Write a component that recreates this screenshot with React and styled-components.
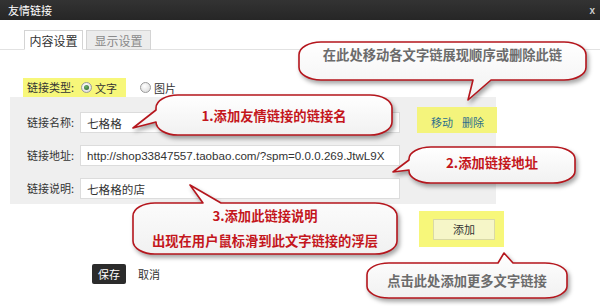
import React from "react";
import styled, { createGlobalStyle } from "styled-components";

const GlobalStyle = createGlobalStyle`
  html, body {
    margin: 0;
    padding: 0;
    background: #fff;
  }
  body {
    font-family: "Noto Sans CJK SC", "Liberation Sans", sans-serif;
    font-size: 11px;
    color: #333;
  }
`;

const Page = styled.div`
  position: relative;
  width: 600px;
  height: 306px;
  overflow: hidden;
  background: #fff;
`;

const TitleBar = styled.div`
  display: flex;
  align-items: center;
  justify-content: space-between;
  height: 20px;
  padding: 0 5px 0 8px;
  background: linear-gradient(#333, #262626);
  color: #fff;
  font-size: 11px;
`;

const Close = styled.span`
  color: #ccc;
  font: bold 10px "Liberation Sans", sans-serif;
`;

const TabBar = styled.div`
  display: flex;
  gap: 3px;
  margin-top: 10px;
  padding-left: 24px;
  border-bottom: 1px solid #e2e2e2;
`;

const Tab = styled.div`
  width: ${(p) => p.$w}px;
  height: 20px;
  margin-bottom: -1px;
  box-sizing: border-box;
  border: 1px solid #d4d4d4;
  border-bottom-color: ${(p) => (p.$active ? "#fff" : "#d4d4d4")};
  background: ${(p) => (p.$active ? "#fff" : "#ececec")};
  color: ${(p) => (p.$active ? "#333" : "#8a8a8a")};
  font-size: 12px;
  line-height: 19px;
  text-align: center;
`;

const TypeRow = styled.div`
  display: flex;
  align-items: center;
  margin: 28px 0 0 23px;
  height: 19px;
`;

const Highlight = styled.div`
  display: flex;
  align-items: center;
  height: 100%;
  padding: 0 9px 0 4px;
  background: #f7f77a;
`;

const Label = styled.span`
  width: ${(p) => p.$w || 53}px;
  flex-shrink: 0;
  color: #333;
  line-height: 21px;
`;

const Radio = styled.span`
  position: relative;
  width: 11px;
  height: 11px;
  box-sizing: border-box;
  margin: 0 3px 0 ${(p) => p.$gap}px;
  border-radius: 50%;
  border: 1px solid #9a9a9a;
  background: radial-gradient(circle at 40% 35%, #fff, #d6d6d6);
  &::after {
    content: "";
    display: ${(p) => (p.$checked ? "block" : "none")};
    position: absolute;
    left: 2px;
    top: 2px;
    width: 5px;
    height: 5px;
    border-radius: 50%;
    background: radial-gradient(circle at 40% 35%, #6fb36f, #245e24);
  }
`;

const Panel = styled.div`
  display: flex;
  flex-direction: column;
  gap: 12px;
  margin: 0 104px 0 10px;
  padding: 10px 0 5px 17px;
  background: #efefef;
`;

const Row = styled.div`
  display: flex;
  align-items: flex-end;
`;

const Field = styled.input`
  width: 320px;
  height: 21px;
  box-sizing: border-box;
  margin: 0;
  padding: 0 6px;
  border: 1px solid #dcdcdc;
  background: #fff;
  color: #333;
  font: 11.6px "Liberation Sans", "Noto Sans CJK SC", sans-serif;
  outline: none;
`;

const Actions = styled.div`
  display: flex;
  align-items: center;
  gap: 9px;
  width: 80px;
  height: 26px;
  box-sizing: border-box;
  margin-left: 17px;
  margin-right: -1px;
  padding: 3px 0 0 14px;
  background: #f4f47c;
`;

const ActionLink = styled.span`
  color: #2c6f8c;
`;

const AddZone = styled.div`
  display: flex;
  align-items: center;
  width: 85px;
  height: 36px;
  margin: 7px 0 0 419px;
  padding-left: 14px;
  box-sizing: border-box;
  background: #f7f77a;
`;

const AddButton = styled.div`
  width: 62px;
  height: 21px;
  box-sizing: border-box;
  border: 1px solid #d9d9a6;
  background: #f6f6c8;
  color: #333;
  line-height: 19px;
  text-align: center;
`;

const SaveRow = styled.div`
  display: flex;
  align-items: center;
  gap: 12px;
  margin: 17px 0 0 92px;
`;

const SaveButton = styled.div`
  width: 34px;
  height: 20px;
  border-radius: 2px;
  background: #2b2b2b;
  color: #fff;
  line-height: 20px;
  text-align: center;
`;

const CalloutBox = styled.div`
  position: absolute;
  left: ${(p) => p.$x}px;
  top: ${(p) => p.$y}px;
  width: ${(p) => p.$w}px;
  height: ${(p) => p.$h}px;
  box-sizing: border-box;
  padding-bottom: ${(p) => p.$lift || 0}px;
  display: flex;
  flex-direction: column;
  align-items: center;
  justify-content: center;
  z-index: 2;
  color: ${(p) => (p.$tone === "red" ? "#c4161c" : "#6b6b6b")};
  font: bold 13.3px/25px "Noto Sans CJK SC", sans-serif;
  white-space: nowrap;
`;

const CalloutShape = styled.svg`
  position: absolute;
  left: 0;
  top: 0;
  overflow: visible;
  z-index: -1;
  filter: drop-shadow(2px 3px 2px rgba(0, 0, 0, 0.35));
`;

const bubblePath = (w, h, rx, ry, t) => {
  let d = `M ${rx} 0`;
  if (t.side === "top") d += ` L ${t.a} 0 L ${t.tx} ${t.ty} L ${t.b} 0`;
  d += ` L ${w - rx} 0 A ${rx} ${ry} 0 0 1 ${w} ${ry} L ${w} ${h - ry} A ${rx} ${ry} 0 0 1 ${w - rx} ${h}`;
  if (t.side === "bottom") d += ` L ${t.b} ${h} L ${t.tx} ${t.ty} L ${t.a} ${h}`;
  d += ` L ${rx} ${h} A ${rx} ${ry} 0 0 1 0 ${h - ry}`;
  if (t.side === "left") d += ` L 0 ${t.b} L ${t.tx} ${t.ty} L 0 ${t.a}`;
  d += ` L 0 ${ry} A ${rx} ${ry} 0 0 1 ${rx} 0 Z`;
  return d;
};

const Callout = ({ x, y, w, h, tail, tone, lift, children }) => (
  <CalloutBox $x={x} $y={y} $w={w} $h={h} $tone={tone} $lift={lift}>
    <CalloutShape width={w} height={h}>
      <defs>
        <linearGradient id={`g${x}${y}`} x1="0" y1="0" x2="0" y2="1">
          <stop offset="0" stopColor="#ffffff" />
          <stop offset="1" stopColor="#f1f1f1" />
        </linearGradient>
      </defs>
      <path
        d={bubblePath(w, h, 22, Math.min(13, h / 3), tail)}
        fill={`url(#g${x}${y})`}
        stroke="#b5161d"
        strokeWidth="1.6"
        strokeLinejoin="round"
      />
    </CalloutShape>
    {children}
  </CalloutBox>
);

export default function App() {
  return (
    <Page>
      <GlobalStyle />
      <TitleBar>
        <span>友情链接</span>
        <Close>x</Close>
      </TitleBar>

      <TabBar>
        <Tab $active $w={59}>内容设置</Tab>
        <Tab $w={65}>显示设置</Tab>
      </TabBar>

      <TypeRow>
        <Highlight>
          <Label $w={54}>链接类型:</Label>
          <Radio $checked $gap={0} />
          <span>文字</span>
        </Highlight>
        <Radio $gap={14} />
        <span>图片</span>
      </TypeRow>

      <Panel>
        <Row>
          <Label>链接名称:</Label>
          <Field readOnly value="七格格" />
          <Actions>
            <ActionLink>移动</ActionLink>
            <ActionLink>删除</ActionLink>
          </Actions>
        </Row>
        <Row>
          <Label>链接地址:</Label>
          <Field readOnly value="http://shop33847557.taobao.com/?spm=0.0.0.269.JtwL9X" />
        </Row>
        <Row>
          <Label>链接说明:</Label>
          <Field readOnly value="七格格的店" />
        </Row>
      </Panel>

      <AddZone>
        <AddButton>添加</AddButton>
      </AddZone>

      <SaveRow>
        <SaveButton>保存</SaveButton>
        <span>取消</span>
      </SaveRow>

      <Callout x={299} y={42} w={287} h={38} lift={14} tone="grey"
        tail={{ side: "bottom", a: 174, b: 192, tx: 169, ty: 58 }}>
        在此处移动各文字链展现顺序或删除此链
      </Callout>
      <Callout x={156} y={95} w={236} h={40} tone="red"
        tail={{ side: "left", a: 15, b: 27, tx: -23, ty: 33 }}>
        1.添加友情链接的链接名
      </Callout>
      <Callout x={409} y={147} w={166} h={36} lift={6} tone="red"
        tail={{ side: "left", a: 13, b: 23, tx: -16, ty: 25 }}>
        2.添加链接地址
      </Callout>
      <Callout x={133} y={203} w={264} h={51} lift={2} tone="red"
        tail={{ side: "top", a: 70, b: 88, tx: 57, ty: -18 }}>
        <span>3.添加此链接说明</span>
        <span>出现在用户鼠标滑到此文字链接的浮层</span>
      </Callout>
      <Callout x={367} y={263} w={200} h={35} tone="grey"
        tail={{ side: "top", a: 131, b: 146, tx: 137, ty: -10 }}>
        点击此处添加更多文字链接
      </Callout>
    </Page>
  );
}
